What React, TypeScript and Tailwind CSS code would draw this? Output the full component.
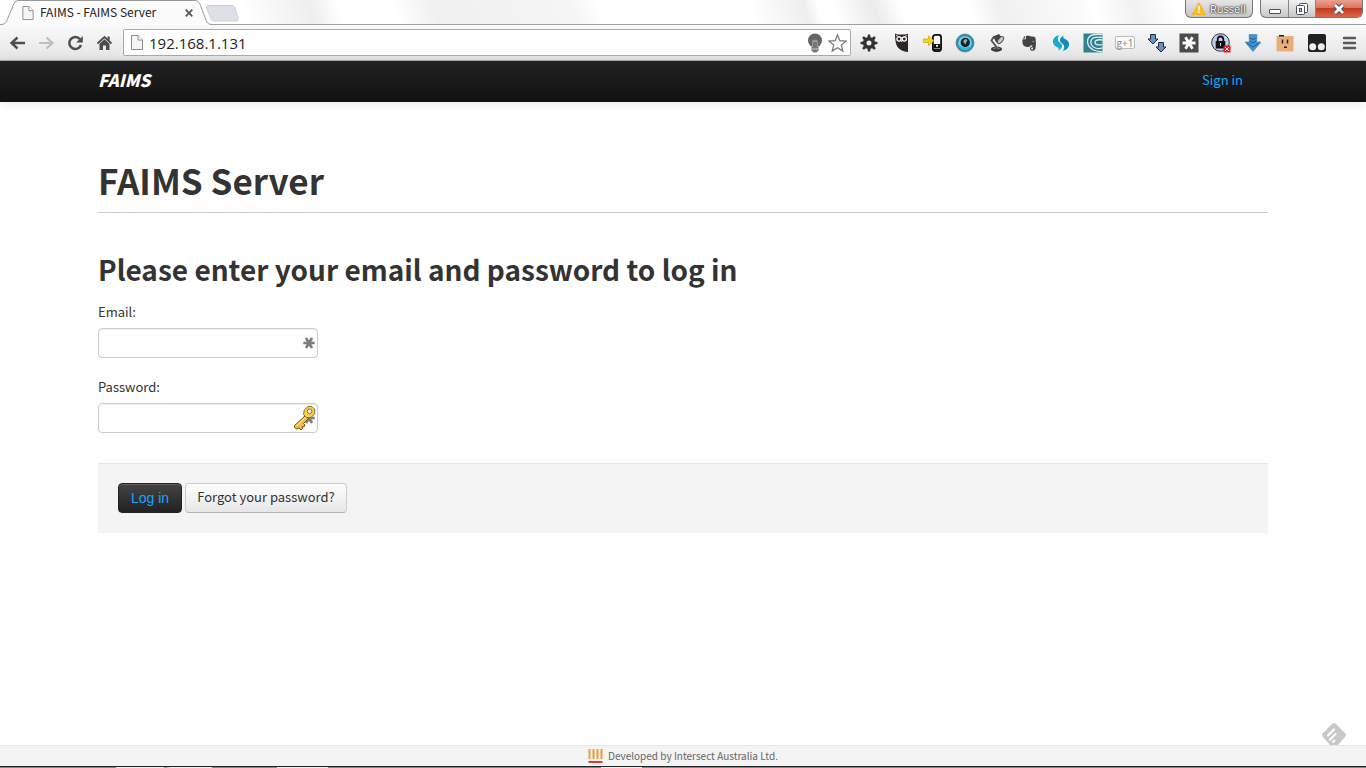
import React from "react";

const sans = "font-['Noto_Sans_CJK_SC',sans-serif]";

function PageIcon({ className }: { className: string }) {
  return (
    <svg viewBox="0 0 12 15" className={className} aria-hidden="true">
      <path d="M.5 .5h6.500l4.500 4.500v9.500H.5z" fill="#f6f6f6" stroke="#8a8a8a" />
      <path d="M7 .5v4.500h4.500" fill="#fff" stroke="#8a8a8a" />
    </svg>
  );
}

function TabStrip() {
  return (
    <header className="flex h-[25px] items-start border-b border-[#a0a0a0] bg-[linear-gradient(72deg,#fff_0%,#fff_18%,#eee_23%,#fff_25%,#fff_29%,#f0f0f0_32%,#f5f5f5_42%,#fff_44%,#fff_55%,#eee_59%,#fff_60%,#fff_61%,#ebebeb_64%,#fff_66%,#fff_71%,#f0f0f0_73%,#fbfbfb_79%,#fff_80%,#f2f2f2_83%,#fff_86%)]">
      <div className="relative flex h-[25px] w-[212px] shrink-0 items-center pl-[22px] pr-[18px]">
        <svg viewBox="0 0 212 25" className="absolute inset-0 h-full w-full" aria-hidden="true">
          <path d="M0 24.500C5 24.500 6 23 7.500 19L13 5.500Q14.500 1.500 18 1.500H195Q199 1.500 200.500 5.500L206 20Q207.500 24.500 212 24.500V25H0z" fill="#fbfbfb" />
          <path d="M0 24.500C5 24.500 6 23 7.500 19L13 5.500Q14.500 .5 18 .5H195Q199 .5 200.500 5.500L206 20Q207.500 24.500 212 24.500" fill="none" stroke="#999" />
        </svg>
        <PageIcon className="relative h-[14px] w-3" />
        <span className="relative ml-[6px] flex-1 whitespace-nowrap pb-px font-['Noto_Sans_CJK_SC',sans-serif] text-[12px] leading-4 text-[#222]">FAIMS - FAIMS Server</span>
        <button type="button" aria-label="Close tab" className="relative">
          <svg viewBox="0 0 10 10" className="h-[10px] w-[10px]" aria-hidden="true">
            <path d="M1.700 1.700l6.600 6.600M8.300 1.700l-6.600 6.600" stroke="#555" strokeWidth="1.700" />
          </svg>
        </button>
      </div>
      <button type="button" aria-label="New tab" className="-ml-[7px] mt-[5px]">
        <svg viewBox="0 0 34 17" className="h-[17px] w-[34px]" aria-hidden="true">
          <path d="M3 .5h24q2 0 3 2l3 11q.5 2.500-2 2.500H9q-2 0-3-2L1.500 3Q1 .5 3 .5z" fill="#dce1e9" stroke="#cdd1d7" />
        </svg>
      </button>
      <div className="ml-auto flex items-start gap-[7px] pr-[3px]">
        <button type="button" className="flex h-[18px] w-[68px] items-center gap-1 rounded-b-md border border-t-0 border-[#777] bg-gradient-to-b from-[#e6e6e6] to-[#c6c6c6] pl-[6px]">
          <svg viewBox="0 0 14 13" className="h-[13px] w-[14px] shrink-0" aria-hidden="true">
            <path d="M7 .8L13.500 12.500H.5z" fill="#ffbe1a" stroke="#f5b21a" strokeLinejoin="round" />
            <path d="M7 4v4.500M7 9.500v1.500" stroke="#fff" strokeWidth="1.500" />
          </svg>
          <span className="font-['Open_Sans',sans-serif] text-[11px] leading-4 text-white [text-shadow:0_0_2px_#333,0_0_2px_#333,0_0_1px_#333]">Russell</span>
        </button>
        <div className="flex h-[18px] overflow-hidden rounded-b-md border border-t-0 border-[#777] bg-gradient-to-b from-[#f1f1f1] to-[#c8c8c8]">
          <button type="button" aria-label="Minimize" className="flex w-[28px] items-center justify-center border-r border-[#888]">
            <svg viewBox="0 0 14 14" className="h-[14px] w-[14px]" aria-hidden="true"><rect x="1.500" y="7.500" width="11" height="4" rx=".5" fill="#fff" stroke="#4b5060" /></svg>
          </button>
          <button type="button" aria-label="Restore" className="flex w-[27px] items-center justify-center border-r border-[#888]">
            <svg viewBox="0 0 14 14" className="h-[14px] w-[14px]" aria-hidden="true">
              <rect x="4.500" y="1.500" width="8" height="9" rx="1" fill="#fff" stroke="#4b5060" />
              <rect x="1.500" y="3.500" width="8" height="9" rx="1" fill="#fff" stroke="#4b5060" />
              <rect x="4.500" y="6.500" width="2" height="3" fill="#ccc" stroke="#4b5060" />
            </svg>
          </button>
          <button type="button" aria-label="Close window" className="flex w-[46px] items-center justify-center bg-[linear-gradient(#e9a290_0%,#dc7560_45%,#c23c20_50%,#d9664a_100%)]">
            <svg viewBox="0 0 14 12" className="h-3 w-[14px]" aria-hidden="true">
              <path d="M3 2l8 8M11 2l-8 8" stroke="#5a4a55" strokeWidth="4.800" />
              <path d="M3 2l8 8M11 2l-8 8" stroke="#fff" strokeWidth="2.700" />
            </svg>
          </button>
        </div>
      </div>
    </header>
  );
}

function ExtIcon({ label, children }: { label: string; children: React.ReactNode }) {
  return (
    <button type="button" aria-label={label} className="h-5 w-5 shrink-0">
      <svg viewBox="0 0 20 20" className="h-5 w-5">{children}</svg>
    </button>
  );
}

const spokes = [0, 45, 90, 135, 180, 225, 270, 315];

function Extensions() {
  return (
    <div className="flex items-center gap-3">
      <ExtIcon label="Settings">
        {spokes.map((a) => <path key={a} d="M8.300 5l.6-3.500h2.200l.6 3.500z" fill="#333" transform={`rotate(${a} 10 10)`} />)}
        <circle cx="10" cy="10" r="4.300" fill="none" stroke="#333" strokeWidth="3.600" />
      </ExtIcon>
      <ExtIcon label="Owl">
        <path d="M4 .5q1.500 1 3 1h7q1.500 0 3-1v18.500q-7-.5-10.500-5Q4 10 4 .5z" fill="#2a2528" />
        <circle cx="8" cy="6" r="2.100" fill="#2a2528" stroke="#fff" strokeWidth="1.300" /><circle cx="13.300" cy="6" r="2.100" fill="#2a2528" stroke="#fff" strokeWidth="1.300" />
        <path d="M5 2.500l5.600 2.200 5.600-2.200" stroke="#fff" strokeWidth=".8" fill="none" /><path d="M9.800 7.500h1.700l-.9 2z" fill="#fff" />
      </ExtIcon>
      <ExtIcon label="Send to phone">
        <rect x="9.900" y="1.900" width="8.200" height="16.200" rx="2.500" fill="#fff" stroke="#111" strokeWidth="1.800" />
        <rect x="10.500" y="11" width="7" height="6.500" fill="#111" />
        <circle cx="14" cy="12.800" r="1.100" fill="#fff" /><path d="M11.500 15.500h1M13.500 15.500h1M15.500 15.500h1" stroke="#fff" />
        <path d="M.5 6h5V3l5.500 4.700-5.500 4.800V9.500h-5z" fill="#ffd800" stroke="#bca21a" strokeWidth=".7" />
      </ExtIcon>
      <ExtIcon label="Eye">
        <circle cx="10" cy="10" r="9" fill="#238eb4" stroke="#777" strokeWidth=".8" />
        <circle cx="10" cy="10" r="6.800" fill="#75d5ef" /><circle cx="10.300" cy="9.500" r="4.700" fill="#17242c" />
        <path d="M8.500 7.500q2.500-3 4 0L11 9.500v2l-2.500-2z" fill="#9ba8b0" /><path d="M4 13q5 5 11 1" stroke="#2cbada" strokeWidth="2" fill="none" />
      </ExtIcon>
      <ExtIcon label="Lamp">
        <path d="M6 3.500l6-2.500 4 5-4 5.500-3-2.500z" fill="#444" /><ellipse cx="13.600" cy="7" rx="4" ry="2.100" transform="rotate(-50 13.600 7)" fill="#ccc" stroke="#555" />
        <path d="M7 3.500L4.500 7.500l5 6.500" fill="none" stroke="#555" strokeWidth="1.900" /><ellipse cx="9.500" cy="16.200" rx="5.500" ry="2.700" fill="#3b3b3b" /><path d="M6.500 15.500q3-1.500 6 0" stroke="#999" fill="none" />
      </ExtIcon>
      <ExtIcon label="Evernote">
        <path d="M3.500 6.200h3.300V3L9 2.400l2.300.9 3.700.5q1.400.2 1.600 2 .8 5-.2 10-.5 2-2.600 2-2.800 0-2.800-2.300 0-2 2.300-2v-1.300q-1.500-.2-2 .7-.5 1.200-2.800 1-4-.3-4.700-3-.7-2.500-.3-4.700z" fill="#444" />
        <path d="M3.600 5.400L6 2.800v2.600z" fill="#555" /><path d="M13 8.500q1.700-.7 2 .7z" fill="#fff" /><path d="M14 14.600h-1.200q-.8.100-.8 1t1 .9H14z" fill="#ddd" />
      </ExtIcon>
      <ExtIcon label="Sync">
        <path d="M8.800 2.200C4 2.500 1.500 6 2 9.500c.5 3 2.800 3.800 5 5 1 .6.700 2 .5 3C11 15.500 12 12.500 10 10.500 8 8.500 6.500 8 6.800 5.500 7 4 7.500 3 8.800 2.200z" fill="#18a8cc" />
        <path d="M11.200 17.800c4.800-.3 7.300-3.800 6.800-7.300-.5-3-2.800-3.800-5-5-1-.6-.7-2-.5-3C9 4.500 8 7.500 10 9.500c2 2 3.500 2.500 3.200 5-.2 1.500-.7 2.500-2 3.300z" fill="#138db8" />
      </ExtIcon>
      <ExtIcon label="Swirl">
        <path d="M.5 .5h19v19H.5z" fill="#318090" />
        <path d="M19.500 1.500Q5 0 4.500 8q0 6 6 9 5 2 9 1.500M19.500 4.500Q9 3 8 8q-1 5 4.500 7 4 1.200 7-.2M19.500 7Q12.500 6 12 9.200q-.2 3.500 7.500 2.500" fill="none" stroke="#e0f1f3" strokeWidth="1.300" />
      </ExtIcon>
      <button type="button" className="flex h-[13px] w-5 shrink-0 items-center justify-center rounded-[2px] border border-[#bbb] bg-[#fafafa] font-['Open_Sans',sans-serif] text-[10px] leading-3 text-[#888]">g+1</button>
      <ExtIcon label="Downloads">
        <path d="M3.500 1.500h5v4.500h2.500L6 11 1 6h2.500z" fill="#6b91b9" stroke="#1d2d44" />
        <path d="M11.500 9.500h5V14H19l-5 5-5-5h2.500z" fill="#6b91b9" stroke="#1d2d44" />
      </ExtIcon>
      <ExtIcon label="LastPass">
        <path d="M.5 .5h19v19H.5z" fill="#4b4b4b" /><path d="M3.500 10h13M6.500 4.200l7 11.600M13.500 4.200l-7 11.600" stroke="#fff" strokeWidth="2.800" />
      </ExtIcon>
      <ExtIcon label="Secure connection">
        <circle cx="9.500" cy="9.500" r="8.800" fill="#b9cff5" stroke="#333" /><path d="M6.700 9V6.500q0-3 2.800-3t2.800 3V9" fill="none" stroke="#111" strokeWidth="1.800" />
        <rect x="4.700" y="8" width="9.600" height="7.500" fill="#111" /><path d="M9.500 10v3" stroke="#ccc" />
        <path d="M12.500 12.500h7v7h-7z" fill="#e9151b" /><path d="M14 14l4 4M18 14l-4 4" stroke="#fff" />
      </ExtIcon>
      <ExtIcon label="Download">
        <path d="M6 1.500h8l-.5 7.500H18L10 18.500 2 9h4.500z" fill="#3b94d4" stroke="#5c86a4" strokeWidth=".7" />
        <path d="M6.500 5l3.500 1.500L13.500 5M6.500 8l3.500 2 3.500-2M4 10l6 4 6-4" stroke="#1b60a0" fill="none" />
      </ExtIcon>
      <ExtIcon label="Face">
        <path d="M1.500 3h17v15.500h-17z" fill="#e9af7b" /><path d="M4 3.500V2h5v1.500z" fill="#0b1d42" /><path d="M7.500 6.500v4M12.500 6.500v4" stroke="#222" strokeWidth="1.500" /><path d="M9 13.500h3v1.500H9z" fill="#222" />
      </ExtIcon>
      <ExtIcon label="Tampermonkey">
        <rect x="1" y="1" width="18" height="18" rx="2" fill="#222" /><circle cx="5.700" cy="13.700" r="3.500" fill="#eee" /><circle cx="14.300" cy="13.700" r="3.500" fill="#eee" />
      </ExtIcon>
      <ExtIcon label="Menu"><path d="M5 5h11M5 10h11M5 15h11" stroke="#5a5a5a" strokeWidth="2.400" strokeLinecap="round" /></ExtIcon>
    </div>
  );
}

function Toolbar() {
  return (
    <div className="flex h-9 items-center border-b border-[#aaa] bg-gradient-to-b from-[#fafafa] to-[#e4e4e4] pl-[9px] pr-[7px]">
      <div className="flex items-center gap-3">
        <button type="button" aria-label="Back"><svg viewBox="0 0 17 16" className="h-4 w-[17px]"><path d="M16 8H3M8.500 2.500L2.500 8l6 5.500" fill="none" stroke="#4d4d4d" strokeWidth="2.400" /></svg></button>
        <button type="button" aria-label="Forward"><svg viewBox="0 0 17 16" className="h-4 w-[17px]"><path d="M1 8h13M8.500 2.500l6 5.500-6 5.500" fill="none" stroke="#bebebe" strokeWidth="2.200" /></svg></button>
        <button type="button" aria-label="Reload"><svg viewBox="0 0 17 16" className="h-4 w-[17px]"><path d="M13 4.200A6 6 0 1 0 14 10" fill="none" stroke="#4d4d4d" strokeWidth="2.500" /><path d="M15.800 1v6.500H9.200z" fill="#4d4d4d" /></svg></button>
        <button type="button" aria-label="Home"><svg viewBox="0 0 17 16" className="h-4 w-[17px]"><path d="M1.500 8.500L8.500 2l7 6.500" fill="none" stroke="#4d4d4d" strokeWidth="1.800" /><path d="M3.500 8.800L8.500 4.200l5 4.600V15H10v-4.500H7V15H3.500zM11.500 1.500h2.200v4.500l-2.200-2z" fill="#4d4d4d" /></svg></button>
      </div>
      <div className="ml-[10px] mr-2 flex h-[27px] flex-1 items-center rounded-[2px] border border-[#aaa] bg-white pl-[7px] pr-[3px]">
        <PageIcon className="h-[15px] w-3" />
        <input aria-label="Address" defaultValue="192.168.1.131" className="ml-[6px] min-w-0 flex-1 bg-transparent font-['Open_Sans',sans-serif] text-[15px] leading-5 text-[#222] outline-none" />
        <button type="button" aria-label="Lights" className="mr-[5px]">
          <svg viewBox="0 0 16 20" className="h-5 w-4">
            <circle cx="8" cy="7.500" r="7" fill="#666" />
            <path d="M5 14.500V9q0-2.500 3-2.500T11 9v5.500z" fill="#999" /><path d="M7 14V9M9 14V9" stroke="#555" />
            <path d="M4.500 14h7v3.500l-2 2h-3l-2-2z" fill="#777" /><path d="M5 16h6" stroke="#ddd" strokeWidth=".8" />
          </svg>
        </button>
        <button type="button" aria-label="Bookmark">
          <svg viewBox="0 0 20 20" className="h-5 w-[19px]"><path d="M10 1.500l2.500 6 6.500.5-5 4.200 1.600 6.300-5.600-3.500-5.600 3.500L6 12.200 1 8l6.500-.5z" fill="#fff" stroke="#777" strokeWidth="1.300" /></svg>
        </button>
      </div>
      <Extensions />
    </div>
  );
}

function Asterisk() {
  return (
    <svg viewBox="0 0 12 12" className="h-3 w-3" aria-hidden="true"><path d="M.3 6h11.400M3 1l6 10M9 1L3 11" stroke="#7d7d7d" strokeWidth="2.700" /></svg>
  );
}

function KeyIcon() {
  return (
    <svg viewBox="0 0 24 26" className="h-[26px] w-6" aria-hidden="true">
      <path d="M13 11L2.500 20.500v2l2 1.500 2.500-1 2 2 1.500-1.500-.5-2 2 .5 1-2-1.500-1.500 5-5z" fill="#f0c04a" stroke="#7a5518" />
      <path d="M16 1.500h4l2.700 2.700v4.500L19 12.500h-4.500L11.500 9.500l.8-4.500z" fill="#f6cc55" stroke="#95702a" />
      <circle cx="17.600" cy="6.300" r="2.300" fill="#fff" stroke="#95702a" /><path d="M13.500 12l-9 9" stroke="#fff0ab" />
    </svg>
  );
}

function Field({ id, label, type, hasKey }: { id: string; label: string; type: string; hasKey?: boolean }) {
  return (
    <div>
      <label htmlFor={id} className="mb-[6px] block text-[13px] leading-5">{label}</label>
      <div className="relative w-[220px]">
        <input id={id} type={type} className="block h-[30px] w-full rounded border border-[#ccc] bg-white px-[6px] pr-7 text-[13px] shadow-[inset_0_1px_1px_rgba(0,0,0,0.075)] outline-none" />
        <span className="pointer-events-none absolute inset-y-0 right-[3px] flex items-center"><Asterisk /></span>
        {hasKey && <span className="pointer-events-none absolute inset-y-0 right-[2px] flex items-center"><KeyIcon /></span>}
      </div>
    </div>
  );
}

export default function App() {
  return (
    <div className={`flex min-h-screen flex-col bg-white text-[#333] ${sans}`}>
      <TabStrip />
      <Toolbar />
      <nav className="relative bg-gradient-to-b from-[#222] to-[#111] shadow-[0_1px_10px_rgba(0,0,0,0.1)]">
        <div className="mx-auto flex h-[41px] max-w-[1170px] items-center justify-between pb-1 pr-[25px]">
          <a href="#home" className="text-[17px] font-black italic leading-5 text-white">FAIMS</a>
          <a href="#signin" className="text-[13px] leading-5 text-[#16a7ff]">Sign in</a>
        </div>
      </nav>
      <main className="relative flex-1 overflow-hidden">
        <div className="mx-auto max-w-[1170px] pt-[58px]">
          <h1 className="border-b border-[#ccc] pb-3 text-[35px] font-bold leading-10">FAIMS Server</h1>
          <h2 className="mt-9 text-[28px] font-bold leading-10">Please enter your email and password to log in</h2>
          <form onSubmit={(e) => e.preventDefault()} className="mt-[13px]">
            <div className="flex flex-col gap-[19px]">
              <Field id="email" label="Email:" type="email" />
              <Field id="password" label="Password:" type="password" hasKey />
            </div>
            <div className="mt-[30px] flex gap-[3px] border-t border-[#e5e5e5] bg-[#f4f4f4] px-5 pb-5 pt-[19px]">
              <button type="submit" className="h-[30px] rounded border border-[#222] bg-gradient-to-b from-[#444] to-[#222] px-3 font-['Liberation_Sans',sans-serif] text-[14px] leading-5 text-[#16a7ff] shadow-[inset_0_1px_0_rgba(255,255,255,0.15)]">Log in</button>
              <button type="button" className="h-[30px] rounded border border-[#ccc] border-b-[#b3b3b3] bg-gradient-to-b from-white to-[#e6e6e6] px-[11px] pb-[2px] text-[13px] leading-5">Forgot your password?</button>
            </div>
          </form>
        </div>
        <svg viewBox="0 0 24 24" className="absolute -bottom-[2px] right-5 h-6 w-6" aria-hidden="true">
          <path d="M10 1q2-2 4 0l9 9q2 2 0 4l-7 8q-1 1-3 1h-2q-2 0-3-1l-7-8q-2-2 0-4z" fill="#c8c8c8" />
          <path d="M6 12.500L12 6.500M8 16.500l5.500-5.500M11 19l1.500-1.500" stroke="#fff" strokeWidth="2.200" strokeLinecap="round" />
        </svg>
      </main>
      <footer className="flex h-[21px] items-center justify-center gap-[5px] border-t border-[#e5e5e5] bg-[#f4f4f4] pb-px">
        <svg viewBox="0 0 15 15" className="h-[15px] w-[15px]" aria-hidden="true"><path d="M1.500 1v10M5.500 1v10M9.500 1v10M13.500 1v10" stroke="#f0983a" strokeWidth="2" /><path d="M.5 14h14" stroke="#df3b30" strokeWidth="2" /></svg>
        <p className="text-[10px] leading-4 text-[#666]">Developed by Intersect Australia Ltd.</p>
      </footer>
      <div className="h-[2px] border-t border-[#222] bg-[linear-gradient(90deg,#888_0%,#888_8.500%,#eee_8.500%,#eee_12%,#888_12%,#eee_12.500%,#eee_15.500%,#888_15.500%,#888_20.300%,#eee_20.300%,#eee_24%,#888_24%,#888_44%,#eee_44%,#eee_47%,#888_47%)]" />
    </div>
  );
}
